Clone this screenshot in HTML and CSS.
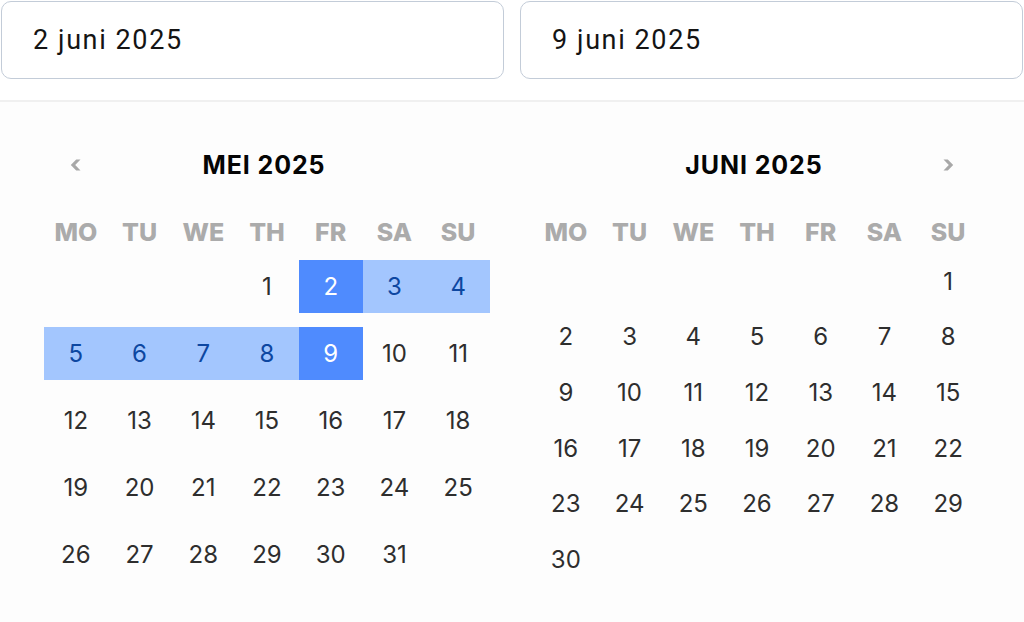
FILE: index.html
```html
<!DOCTYPE html>
<html lang="nl">
<head>
<meta charset="utf-8">
<title>Datumbereik</title>
<link rel="stylesheet" href="styles.css">
</head>
<body>
<div class="pickers">
  <div class="field">2 juni 2025</div>
  <div class="field">9 juni 2025</div>
</div>
<div class="calendars">
  <section class="month">
    <div class="month-head">
      <span class="nav"><svg viewBox="0 0 11 12" width="11" height="12"><polygon points="10.5,0.5 5.2,6 10.5,11.5 6.2,11.5 0.8,6 6.2,0.5"/></svg></span>
      <h2 class="month-title">MEI 2025</h2>
      <span class="nav"></span>
    </div>
    <div class="weekdays"><span>MO</span><span>TU</span><span>WE</span><span>TH</span><span>FR</span><span>SA</span><span>SU</span></div>
    <div class="days">
      <div class="day"></div><div class="day"></div><div class="day"></div>
      <div class="day"><span class="cell">1</span></div>
      <div class="day"><span class="cell sel">2</span></div>
      <div class="day"><span class="cell range">3</span></div>
      <div class="day"><span class="cell range">4</span></div>
      <div class="day"><span class="cell range">5</span></div>
      <div class="day"><span class="cell range">6</span></div>
      <div class="day"><span class="cell range">7</span></div>
      <div class="day"><span class="cell range">8</span></div>
      <div class="day"><span class="cell sel">9</span></div>
      <div class="day"><span class="cell">10</span></div>
      <div class="day"><span class="cell">11</span></div>
      <div class="day"><span class="cell">12</span></div>
      <div class="day"><span class="cell">13</span></div>
      <div class="day"><span class="cell">14</span></div>
      <div class="day"><span class="cell">15</span></div>
      <div class="day"><span class="cell">16</span></div>
      <div class="day"><span class="cell">17</span></div>
      <div class="day"><span class="cell">18</span></div>
      <div class="day"><span class="cell">19</span></div>
      <div class="day"><span class="cell">20</span></div>
      <div class="day"><span class="cell">21</span></div>
      <div class="day"><span class="cell">22</span></div>
      <div class="day"><span class="cell">23</span></div>
      <div class="day"><span class="cell">24</span></div>
      <div class="day"><span class="cell">25</span></div>
      <div class="day"><span class="cell">26</span></div>
      <div class="day"><span class="cell">27</span></div>
      <div class="day"><span class="cell">28</span></div>
      <div class="day"><span class="cell">29</span></div>
      <div class="day"><span class="cell">30</span></div>
      <div class="day"><span class="cell">31</span></div>
    </div>
  </section>
  <section class="month">
    <div class="month-head">
      <span class="nav"></span>
      <h2 class="month-title">JUNI 2025</h2>
      <span class="nav"><svg viewBox="0 0 11 12" width="11" height="12"><polygon points="0.5,0.5 5.8,6 0.5,11.5 4.8,11.5 10.2,6 4.8,0.5"/></svg></span>
    </div>
    <div class="weekdays"><span>MO</span><span>TU</span><span>WE</span><span>TH</span><span>FR</span><span>SA</span><span>SU</span></div>
    <div class="days">
      <div class="day"></div><div class="day"></div><div class="day"></div><div class="day"></div><div class="day"></div><div class="day"></div>
      <div class="day"><span class="cell">1</span></div>
      <div class="day"><span class="cell">2</span></div>
      <div class="day"><span class="cell">3</span></div>
      <div class="day"><span class="cell">4</span></div>
      <div class="day"><span class="cell">5</span></div>
      <div class="day"><span class="cell">6</span></div>
      <div class="day"><span class="cell">7</span></div>
      <div class="day"><span class="cell">8</span></div>
      <div class="day"><span class="cell">9</span></div>
      <div class="day"><span class="cell">10</span></div>
      <div class="day"><span class="cell">11</span></div>
      <div class="day"><span class="cell">12</span></div>
      <div class="day"><span class="cell">13</span></div>
      <div class="day"><span class="cell">14</span></div>
      <div class="day"><span class="cell">15</span></div>
      <div class="day"><span class="cell">16</span></div>
      <div class="day"><span class="cell">17</span></div>
      <div class="day"><span class="cell">18</span></div>
      <div class="day"><span class="cell">19</span></div>
      <div class="day"><span class="cell">20</span></div>
      <div class="day"><span class="cell">21</span></div>
      <div class="day"><span class="cell">22</span></div>
      <div class="day"><span class="cell">23</span></div>
      <div class="day"><span class="cell">24</span></div>
      <div class="day"><span class="cell">25</span></div>
      <div class="day"><span class="cell">26</span></div>
      <div class="day"><span class="cell">27</span></div>
      <div class="day"><span class="cell">28</span></div>
      <div class="day"><span class="cell">29</span></div>
      <div class="day"><span class="cell">30</span></div>
    </div>
  </section>
</div>
</body>
</html>
```

FILE: styles.css
```css
* { box-sizing: border-box; }

html, body {
  margin: 0;
  padding: 0;
  background: #fdfdfd;
}

body {
  width: 1024px;
  height: 622px;
  overflow: hidden;
  font-family: Inter, "Noto Sans", sans-serif;
}

.pickers {
  display: flex;
  gap: 16px;
  padding: 1px 1px 0 1px;
  height: 100px;
  background: #ffffff;
}

.field {
  flex: 1;
  height: 78px;
  border: 1px solid #c3ccd8;
  border-radius: 10px;
  background: #ffffff;
  display: flex;
  align-items: center;
  padding-left: 31px;
  font-family: Roboto, "Liberation Sans", sans-serif;
  font-size: 27px;
  letter-spacing: 1.6px;
  color: #141414;
}

.calendars {
  border-top: 2px solid #f0f0f0;
  display: flex;
  gap: 44px;
  padding: 41px 44px 0 44px;
}

.month {
  width: 446px;
  display: flex;
  flex-direction: column;
}

.month-head {
  display: grid;
  grid-template-columns: 1fr 5fr 1fr;
  align-items: center;
  height: 44px;
  margin-bottom: 23px;
}

.nav {
  display: flex;
  justify-content: center;
  align-items: center;
}

.nav svg polygon {
  fill: #a8a8a8;
}

.month-title {
  margin: 0;
  padding-right: 6px;
  text-align: center;
  font-size: 25px;
  font-weight: 700;
  letter-spacing: 0.9px;
  color: #050505;
}

.weekdays {
  display: grid;
  grid-template-columns: repeat(7, 1fr);
  height: 43px;
  align-items: center;
  text-align: center;
  font-size: 25px;
  font-weight: 800;
  color: #ababab;
}

.days {
  display: grid;
  grid-template-columns: repeat(7, 1fr);
  grid-auto-rows: 1fr;
  height: 334px;
}

.day {
  display: flex;
  align-items: center;
}

.cell {
  width: 100%;
  height: 53px;
  display: flex;
  align-items: center;
  justify-content: center;
  padding-top: 1px;
  font-size: 24px;
  font-weight: 400;
  color: #2e2e2e;
}

.cell.range {
  background: #a3c6fe;
  color: #0d47a1;
}

.cell.sel {
  background: #4f8bfe;
  color: #ffffff;
}
```
